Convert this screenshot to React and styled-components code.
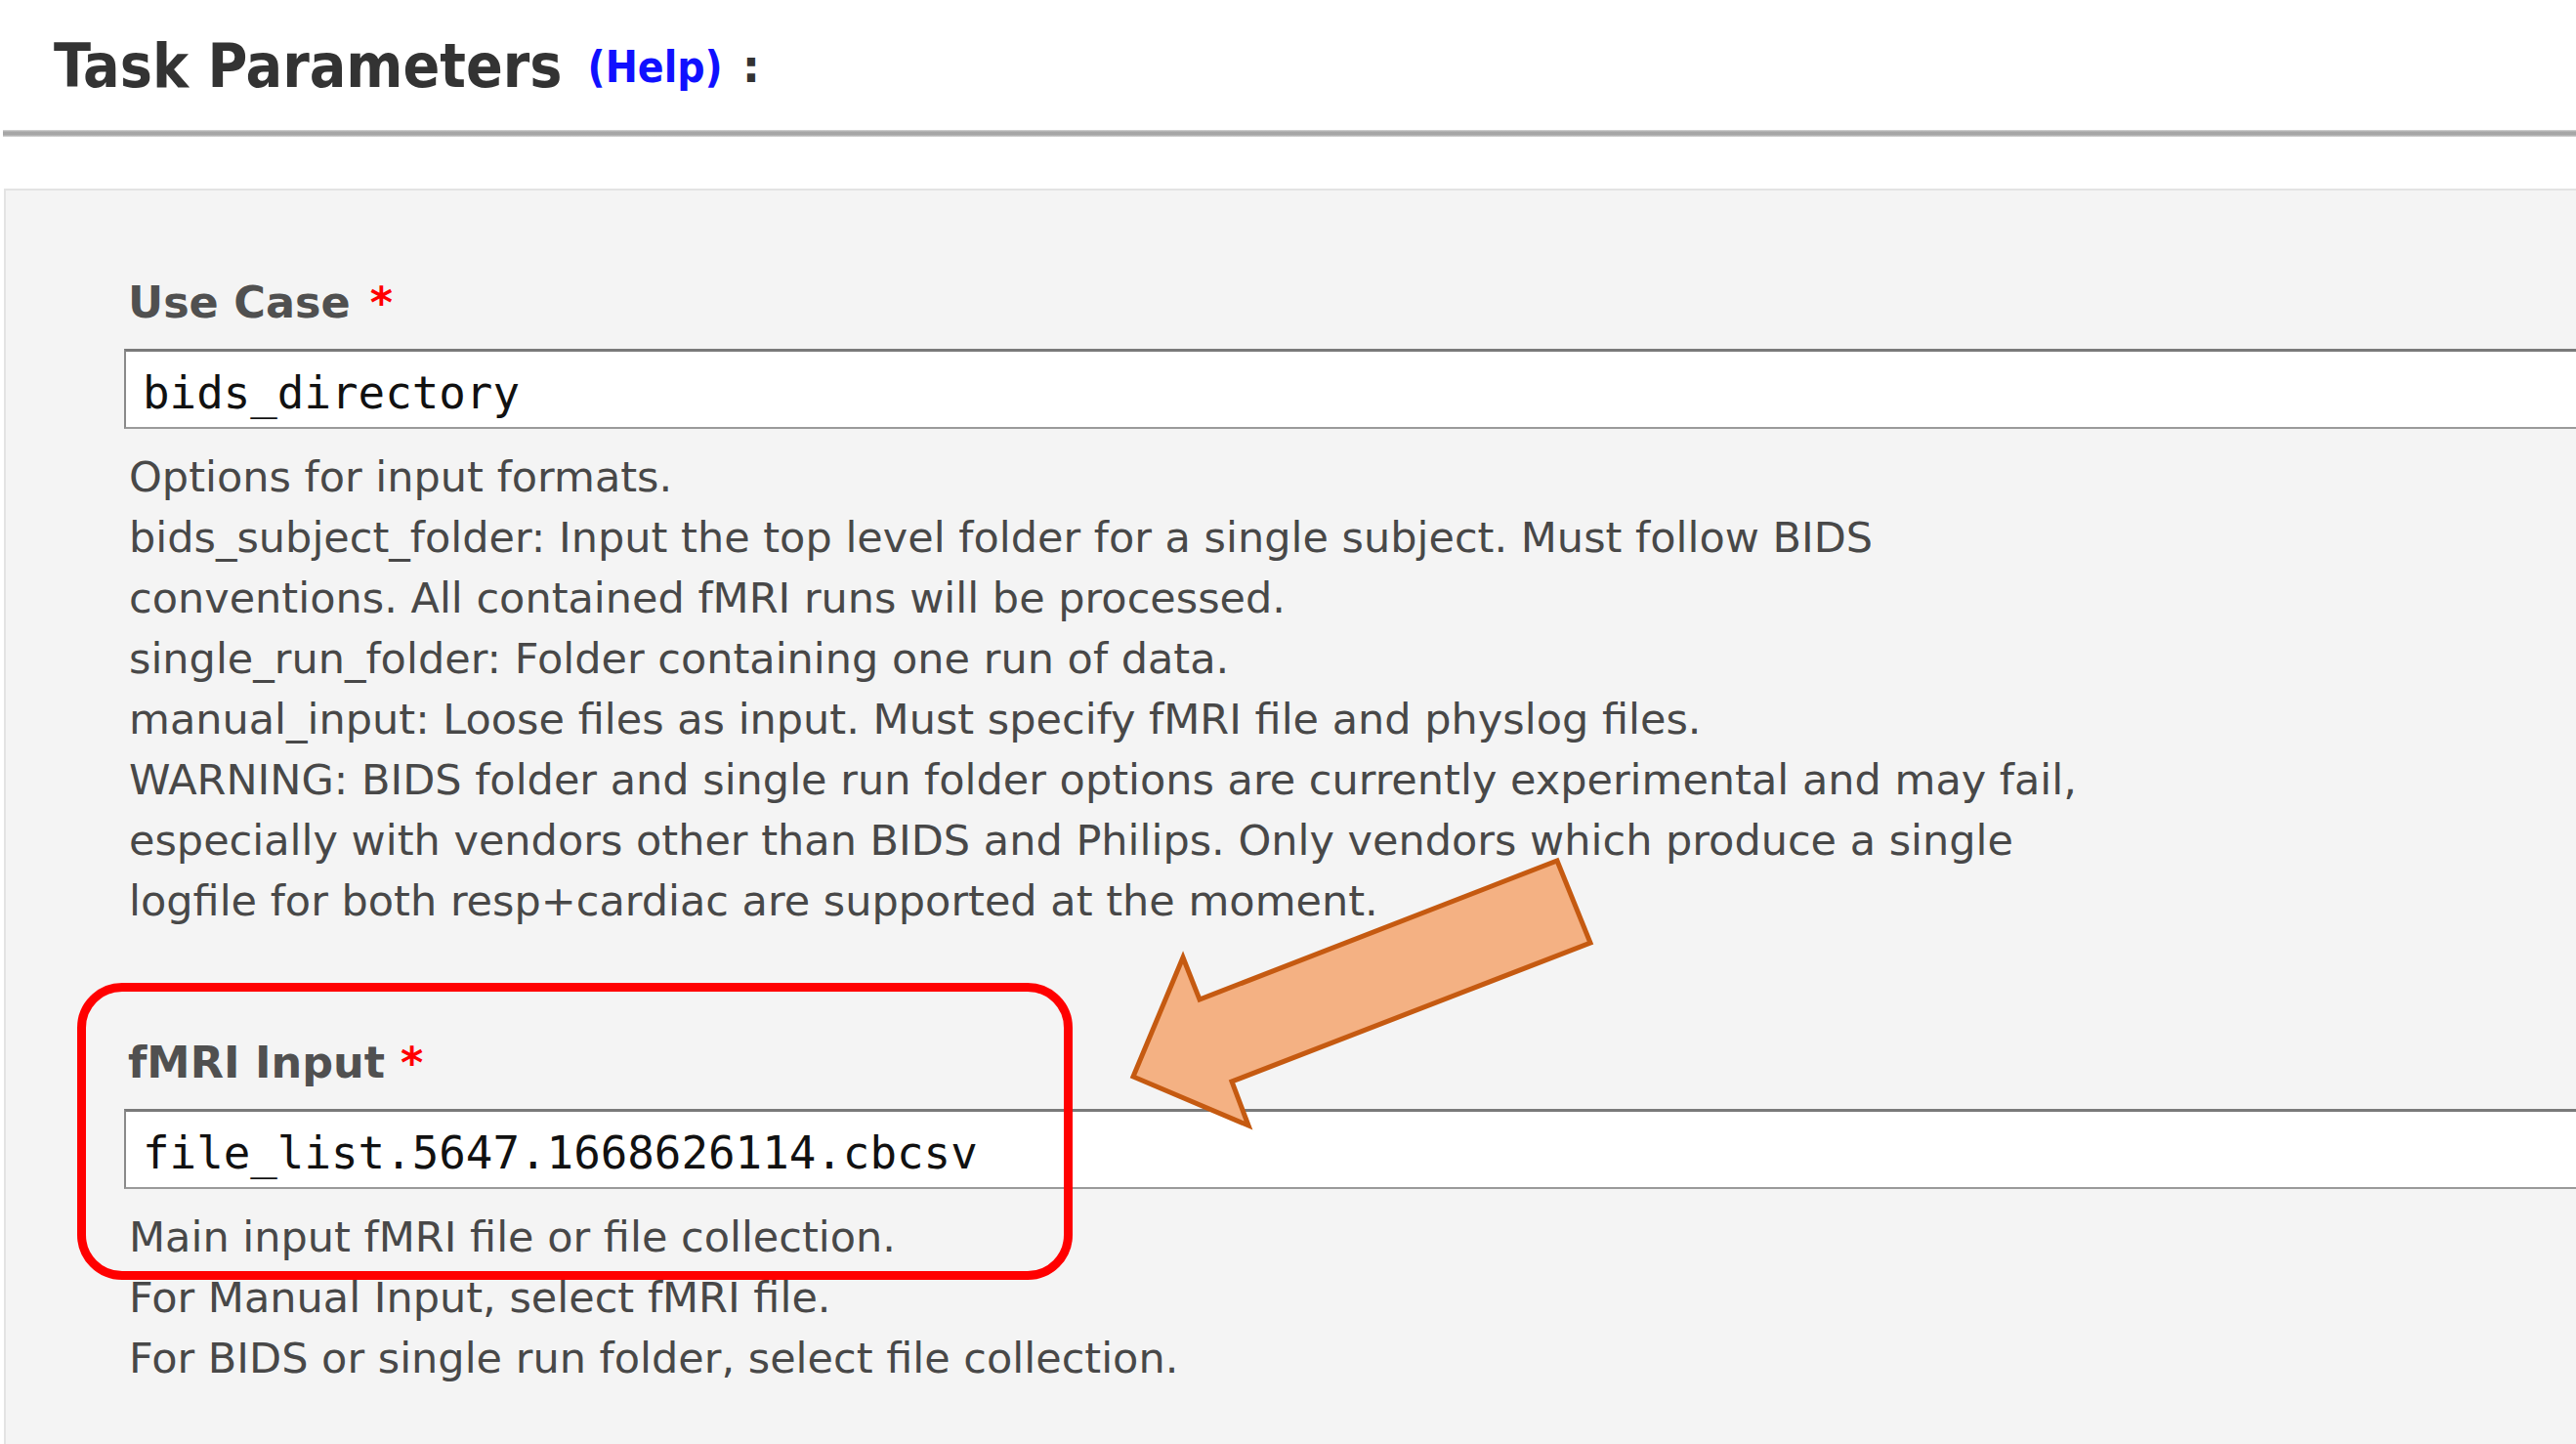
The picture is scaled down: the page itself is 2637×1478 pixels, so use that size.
import React from 'react';
import styled, { createGlobalStyle } from 'styled-components';

const GlobalStyle = createGlobalStyle`
  html, body {
    margin: 0;
    padding: 0;
    background: #fff;
    overflow: hidden;
  }
`;

const Page = styled.div`
  position: relative;
  width: 2637px;
  height: 1478px;
  overflow: hidden;
  background: #fff;
`;

const Header = styled.div`
  height: 133px;
  box-sizing: border-box;
  padding: 32px 0 0 55px;
  white-space: nowrap;
`;

const Title = styled.h1`
  display: inline;
  margin: 0;
  font-family: "DejaVu Sans", Verdana, sans-serif;
  font-stretch: condensed;
  font-weight: bold;
  font-size: 62px;
  line-height: 72px;
  color: #333;
`;

const HelpLink = styled.a`
  margin-left: 26px;
  font-family: "DejaVu Sans", Verdana, sans-serif;
  font-stretch: condensed;
  font-weight: bold;
  font-size: 44px;
  color: #1010ff;
  text-decoration: none;
  vertical-align: 5px;
`;

const Colon = styled.span`
  margin-left: 20px;
  font-family: "DejaVu Sans", Verdana, sans-serif;
  font-weight: bold;
  font-size: 46px;
  color: #333;
  vertical-align: 5px;
`;

const Rule = styled.div`
  margin-left: 3px;
  height: 7px;
  background: linear-gradient(#d6d6d6, #a6a6a6 30%, #a6a6a6 70%, #d6d6d6);
`;

const Panel = styled.div`
  margin: 53px 0 0 4px;
  width: 2700px;
  height: 1300px;
  box-sizing: border-box;
  background: #f4f4f4;
  border-top: 2px solid #e3e3e3;
  border-left: 2px solid #e3e3e3;
  padding: 90px 0 0 121px;
`;

const Field = styled.div`
  & + & {
    margin-top: 110px;
  }
`;

const Label = styled.div`
  margin-left: 4px;
  font-family: "DejaVu Sans", Verdana, sans-serif;
  font-weight: bold;
  font-size: 44.5px;
  line-height: 50px;
  color: #505050;
`;

const Required = styled.span`
  margin-left: ${(p) => p.$gap}px;
  color: #ff0000;
`;

const ValueBox = styled.input`
  display: block;
  margin-top: 22px;
  width: 2600px;
  height: 82px;
  box-sizing: border-box;
  padding: 6px 0 0 17px;
  background: #fff;
  border: 2px solid #9a9a9a;
  border-top: 3px solid #7a7a7a;
  border-left-color: #8a8a8a;
  outline: none;
  font-family: "DejaVu Sans Mono", Consolas, monospace;
  font-size: 45.8px;
  color: #111;
`;

const HelpText = styled.div`
  margin: 18px 0 0 5px;
  font-family: "DejaVu Sans", Verdana, sans-serif;
  font-size: 43px;
  line-height: 62px;
  color: #484848;
  white-space: nowrap;
`;

const Highlight = styled.div`
  position: absolute;
  left: 79px;
  top: 1006px;
  width: 1019px;
  height: 304px;
  box-sizing: border-box;
  border: 9px solid #ff0000;
  border-radius: 46px;
  pointer-events: none;
`;

const Overlay = styled.svg`
  position: absolute;
  left: 0;
  top: 0;
  pointer-events: none;
`;

const fields = [
  {
    label: 'Use Case',
    gap: 20,
    value: 'bids_directory',
    help: [
      'Options for input formats.',
      'bids_subject_folder: Input the top level folder for a single subject. Must follow BIDS',
      'conventions. All contained fMRI runs will be processed.',
      'single_run_folder: Folder containing one run of data.',
      'manual_input: Loose files as input. Must specify fMRI file and physlog files.',
      'WARNING: BIDS folder and single run folder options are currently experimental and may fail,',
      'especially with vendors other than BIDS and Philips. Only vendors which produce a single',
      'logfile for both resp+cardiac are supported at the moment.',
    ],
  },
  {
    label: 'fMRI Input',
    gap: 16,
    value: 'file_list.5647.1668626114.cbcsv',
    help: [
      'Main input fMRI file or file collection.',
      'For Manual Input, select fMRI file.',
      'For BIDS or single run folder, select file collection.',
    ],
  },
];

const Arrow = () => (
  <Overlay width="2637" height="1478" viewBox="0 0 2637 1478">
    <polygon
      points="1160,1102 1211,980 1228,1023 1594,881 1628,965 1261,1107 1278,1152"
      fill="#f4b183"
      stroke="#c55a11"
      strokeWidth="5"
      strokeLinejoin="miter"
    />
  </Overlay>
);

export default function App() {
  return (
    <Page>
      <GlobalStyle />
      <Header>
        <Title>Task Parameters</Title>
        <HelpLink href="#">(Help)</HelpLink>
        <Colon>:</Colon>
      </Header>
      <Rule />
      <Panel>
        {fields.map((f) => (
          <Field key={f.label}>
            <Label>
              {f.label}
              <Required $gap={f.gap}>*</Required>
            </Label>
            <ValueBox readOnly value={f.value} />
            <HelpText>
              {f.help.map((line) => (
                <div key={line}>{line}</div>
              ))}
            </HelpText>
          </Field>
        ))}
      </Panel>
      <Highlight />
      <Arrow />
    </Page>
  );
}
